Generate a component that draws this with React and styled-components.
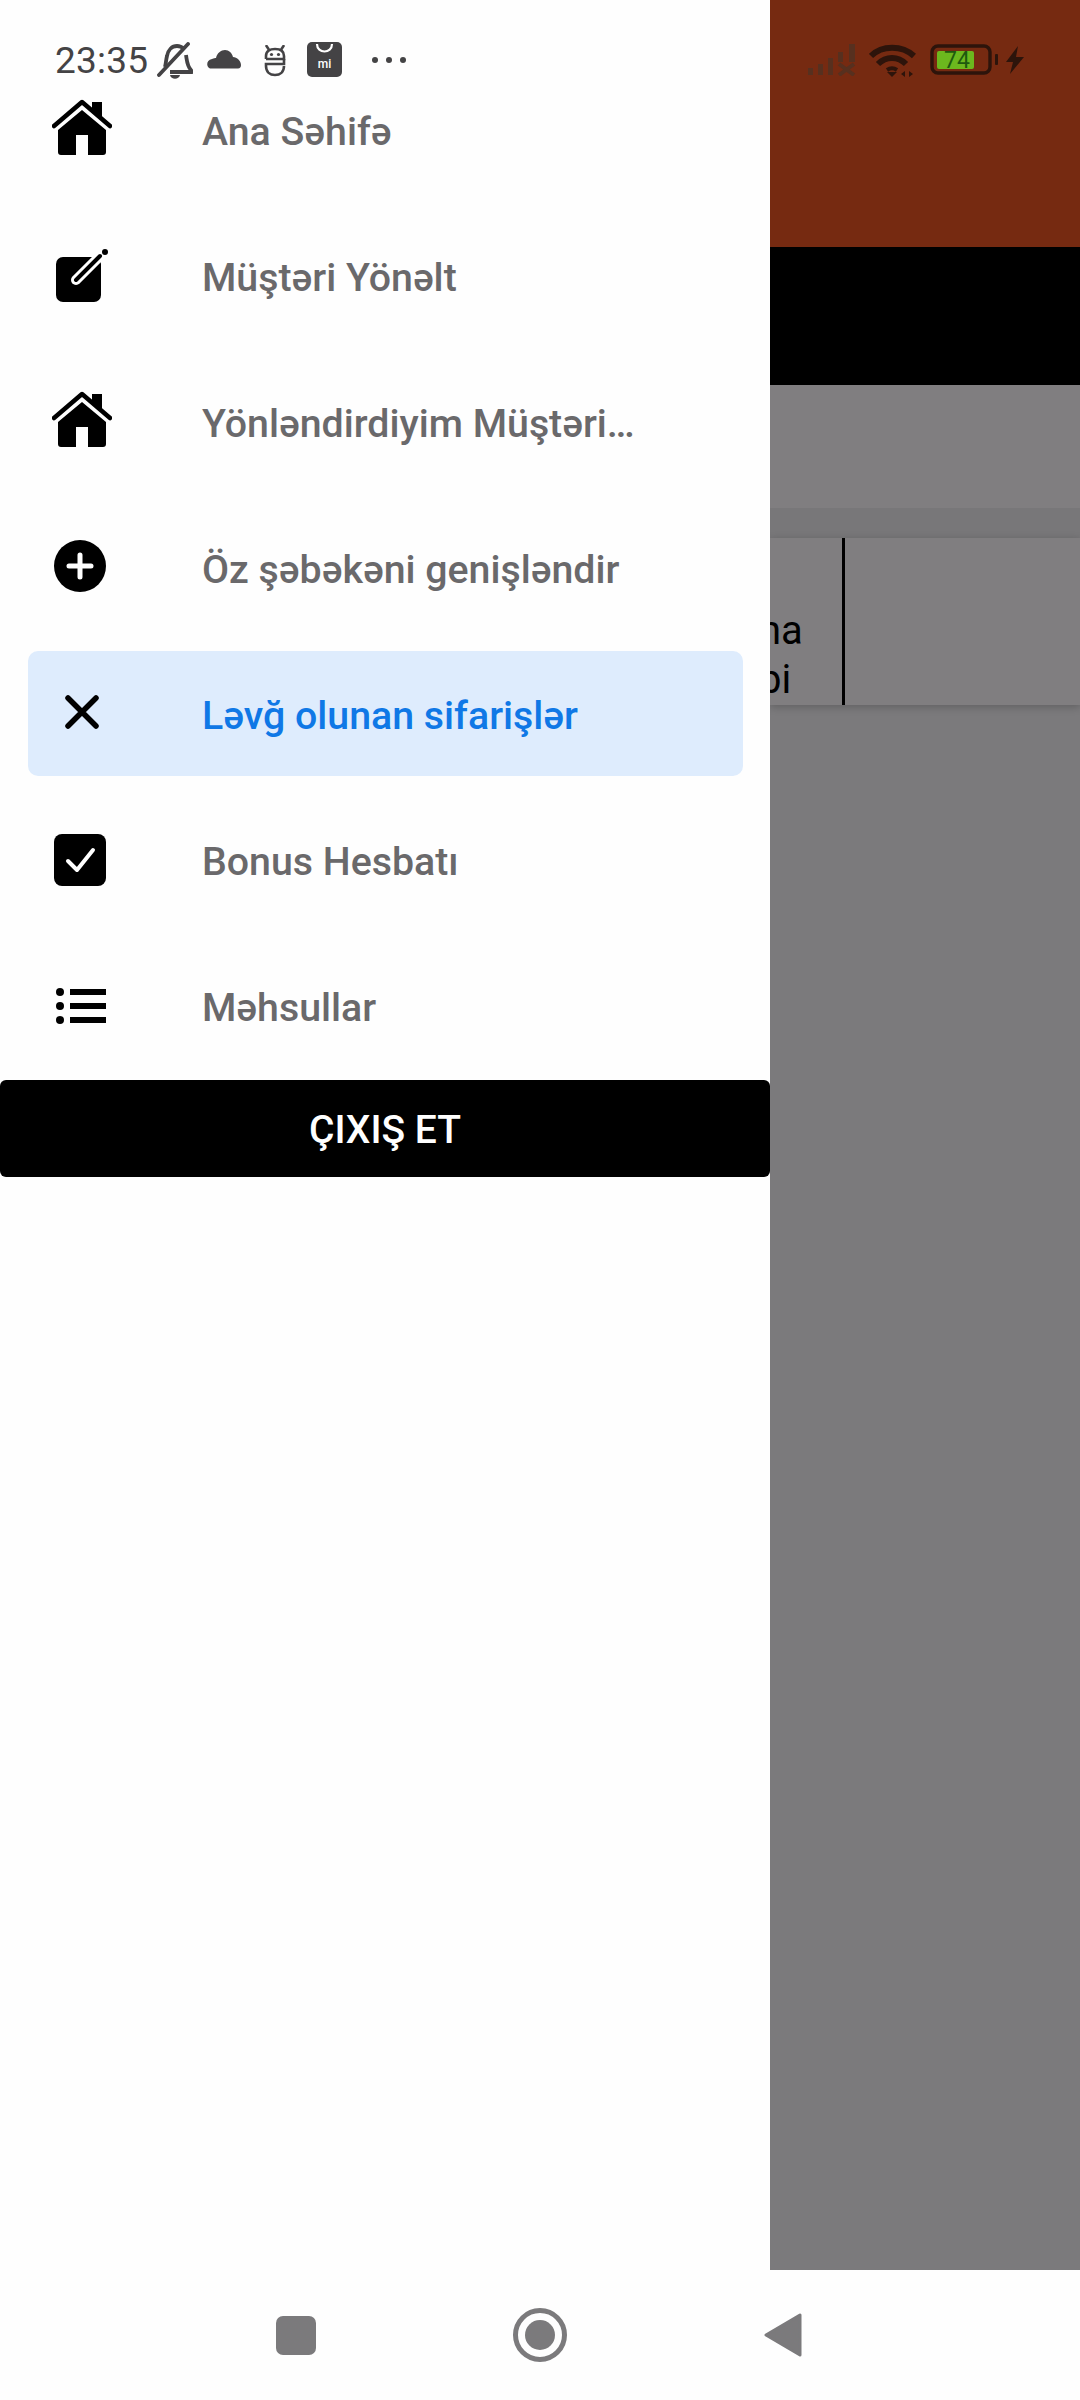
import React from 'react'
import styled, { createGlobalStyle } from 'styled-components'

const GlobalStyle = createGlobalStyle`
  html, body {
    margin: 0;
    padding: 0;
    background: #fff;
  }
  * {
    box-sizing: border-box;
  }
`

const Page = styled.div`
  width: 1080px;
  height: 2400px;
  display: flex;
  flex-direction: column;
  font-family: Roboto, "Liberation Sans", sans-serif;
  background: #fefefe;
  overflow: hidden;
`

const Main = styled.div`
  height: 2270px;
  display: flex;
`

const Drawer = styled.aside`
  width: 770px;
  flex-shrink: 0;
  background: #fefefe;
  display: flex;
  flex-direction: column;
`

const StatusLeft = styled.div`
  height: 67px;
  padding: 42px 0 0 55px;
  display: flex;
  align-items: flex-start;
  color: #444345;
`

const Time = styled.span`
  font-size: 37px;
  line-height: 38px;
  width: 102px;
  letter-spacing: 0.2px;
`

const StatusGlyph = styled.svg`
  display: block;
  flex-shrink: 0;
  margin-top: ${p => p.$top || 0}px;
  margin-right: ${p => p.$gap || 0}px;
`

const Menu = styled.nav`
  padding: 0 27px 0 28px;
  display: flex;
  flex-direction: column;
  gap: 21px;
`

const MenuItem = styled.div`
  height: 125px;
  display: flex;
  align-items: center;
  border-radius: 10px;
  background: ${p => (p.$active ? '#deecfd' : 'transparent')};
`

const IconSlot = styled.div`
  width: 174px;
  padding-left: 24px;
  flex-shrink: 0;
  display: flex;
  align-items: center;
  color: #000;
`

const Label = styled.span`
  font-size: 39.3px;
  font-weight: 500;
  padding-top: 5px;
  color: ${p => (p.$active ? '#0f78e6' : '#6a696b')};
  white-space: nowrap;
`

const LogoutButton = styled.button`
  height: 97px;
  margin-top: 12px;
  width: 100%;
  border: none;
  border-radius: 6px;
  background: #000;
  color: #fff;
  font-family: inherit;
  font-size: 39px;
  font-weight: 500;
  padding: 2px 0 0;
`

const Backdrop = styled.div`
  flex: 1;
  display: flex;
  flex-direction: column;
  background: #7b7a7c;
  overflow: hidden;
`

const Header = styled.div`
  height: 247px;
  background: #762a11;
  padding: 44px 0 0 38px;
  display: flex;
  align-items: flex-start;
`

const BlackBar = styled.div`
  height: 138px;
  background: #000;
`

const GreyBar = styled.div`
  height: 123px;
  background: #807e80;
`

const Band = styled.div`
  height: 30px;
  background: #787779;
`

const TableRow = styled.div`
  height: 167px;
  display: flex;
  background: #807e80;
  box-shadow: 0 2px 8px rgba(0, 0, 0, 0.22);
`

const TableCell = styled.div`
  width: 75px;
  border-right: 3px solid #000;
  display: flex;
  flex-direction: column;
  justify-content: flex-end;
  color: #000;
  font-size: 40px;
  line-height: 49px;
  padding-bottom: 1px;
`

const CellLine = styled.span`
  margin-left: -11px;
`

const NavBar = styled.div`
  height: 130px;
  background: #fefefe;
  padding-left: 276px;
  display: flex;
  align-items: center;
  gap: 197px;
`

const NavSquare = styled.div`
  width: 40px;
  height: 39px;
  border-radius: 7px;
  background: #7b7a7c;
`

const NavHome = styled.div`
  width: 54px;
  height: 54px;
  border-radius: 50%;
  border: 5px solid #7b7a7c;
  display: flex;
  align-items: center;
  justify-content: center;

  &::after {
    content: '';
    width: 30px;
    height: 30px;
    border-radius: 50%;
    background: #7b7a7c;
  }
`

const IconSvg = styled.svg`
  display: block;
  flex-shrink: 0;
  margin-left: ${p => p.$left || 0}px;
  margin-bottom: ${p => p.$bottom || 0}px;
`

const BellOffIcon = () => (
  <StatusGlyph width="36" height="38" viewBox="0 0 36 38" fill="none" stroke="#444345" strokeWidth="3.8" $gap={14}>
    <path d="M8 25 C9 21 9 18 10 14 C11 8 15 4 20 4 C23 4 25 5 27 7" strokeLinejoin="round" />
    <path d="M29 13 C30 19 30 24 34 28 L35 30 H13" strokeLinejoin="round" />
    <path d="M2 33 L31 2" strokeLinecap="round" />
    <path d="M13 33 H23 C22 38 14 38 13 33 Z" fill="#444345" stroke="none" />
  </StatusGlyph>
)

const CloudIcon = () => (
  <StatusGlyph width="34" height="20" viewBox="0 0 34 20" $top={7} $gap={22}>
    <path
      d="M3 19.5 C-1 18 -1 11 5 10 C7 9 8 9 9 9 C10 4 14 1 18 1 C22 1 25 4 26 8 C30 8 34 12 34 16 C34 18 33 19.5 31 19.5 Z"
      fill="#444345"
    />
  </StatusGlyph>
)

const RobotIcon = () => (
  <StatusGlyph width="24" height="32" viewBox="0 0 24 32" fill="none" stroke="#444345" strokeWidth="2.6" $top={3} $gap={20}>
    <path d="M3 14 V11 C3 6 7 4 12 4 C17 4 21 6 21 11 V14 H3" />
    <path d="M21 14 V19 H3 C3 19 3 20 3 21 C3 27 7 30 12 30 C17 30 21 27 21 21" />
    <path d="M3.5 1 L5.5 4 M20.5 1 L18.5 4" strokeLinecap="round" />
    <circle cx="8.5" cy="9.5" r="1.6" fill="#444345" stroke="none" />
    <circle cx="15.5" cy="9.5" r="1.6" fill="#444345" stroke="none" />
  </StatusGlyph>
)

const MiShopIcon = () => (
  <StatusGlyph width="35" height="35" viewBox="0 0 35 35" $gap={30}>
    <rect width="35" height="35" rx="5" fill="#444345" />
    <path d="M10 2 C10 12 25 12 25 2" fill="none" stroke="#fff" strokeWidth="2.2" />
    <text x="17.5" y="26" textAnchor="middle" fontSize="12" fontWeight="500" fill="#fff" fontFamily="Roboto, sans-serif">
      mi
    </text>
  </StatusGlyph>
)

const DotsIcon = () => (
  <StatusGlyph width="34" height="8" viewBox="0 0 34 8" $top={14}>
    <circle cx="3" cy="4" r="3" fill="#444345" />
    <circle cx="17" cy="4" r="3" fill="#444345" />
    <circle cx="31" cy="4" r="3" fill="#444345" />
  </StatusGlyph>
)

const SignalIcon = () => (
  <StatusGlyph width="48" height="32" viewBox="0 0 48 32" fill="#57301f" $gap={13}>
    <rect x="0" y="24" width="5" height="7" />
    <rect x="10" y="20" width="5" height="11" />
    <rect x="20" y="14" width="5" height="17" />
    <rect x="30" y="8" width="5" height="10" />
    <rect x="41" y="0" width="6" height="18" />
    <path d="M31 20 L46 31 M46 20 L31 31" stroke="#57301f" strokeWidth="4" />
  </StatusGlyph>
)

const WifiIcon = () => (
  <StatusGlyph width="47" height="34" viewBox="0 0 47 34" fill="none" stroke="#2d140b" strokeWidth="6" $gap={14}>
    <path d="M2 12 C13 1 33 1 45 12" />
    <path d="M9 20 C17 12 29 12 37 20" />
    <path d="M18 26 C21 24 25 24 28 26" strokeWidth="4" />
    <path d="M18 28 H28 L23 33 Z" fill="#2d140b" stroke="none" />
    <path d="M36 27 L32 30 L36 33 Z M40 27 L44 30 L40 33 Z" fill="#2d140b" stroke="none" />
  </StatusGlyph>
)

const BatteryIcon = () => (
  <StatusGlyph width="70" height="32" viewBox="0 0 70 32" $gap={6}>
    <rect x="2" y="2" width="58" height="27" rx="6" fill="none" stroke="#2d140b" strokeWidth="3.4" />
    <rect x="7" y="7" width="37" height="18" rx="2" fill="#6cb81e" />
    <text x="27" y="24" textAnchor="middle" fontSize="23" fill="#1e5a0e" fontFamily="Roboto, sans-serif">
      74
    </text>
    <rect x="65" y="10" width="3" height="11" rx="1" fill="#2d140b" />
  </StatusGlyph>
)

const BoltIcon = () => (
  <StatusGlyph width="18" height="28" viewBox="0 0 18 28" $top={2}>
    <path d="M12 0 L0 16 H7 L4 28 L18 11 H10 Z" fill="#2d140b" />
  </StatusGlyph>
)

const HomeIcon = () => (
  <IconSvg width="60" height="56" viewBox="0 0 60 56" $bottom={5}>
    <path d="M40 3 H50 V18 L40 10 Z" fill="#000" />
    <path d="M2 27 L30 3 L58 27" fill="none" stroke="#000" strokeWidth="4.5" strokeLinecap="round" strokeLinejoin="round" />
    <path
      d="M6 31 L30 11 L54 31 V53 A3 3 0 0 1 51 56 H36 V36 H24 V56 H9 A3 3 0 0 1 6 53 Z"
      fill="#000"
    />
  </IconSvg>
)

const EditIcon = () => (
  <IconSvg width="56" height="54" viewBox="0 0 56 54" $left={4}>
    <rect x="0" y="8" width="45" height="45" rx="7" fill="#000" />
    <path d="M20 31 L44 7" stroke="#fff" strokeWidth="10" strokeLinecap="round" />
    <path d="M20 31 L44 7" stroke="#000" strokeWidth="4" strokeLinecap="round" />
    <circle cx="49" cy="3" r="3" fill="#000" />
  </IconSvg>
)

const PlusIcon = () => (
  <IconSvg width="52" height="52" viewBox="0 0 52 52" $left={2} $bottom={3}>
    <circle cx="26" cy="26" r="26" fill="#000" />
    <path d="M26 15 V37 M15 26 H37" stroke="#fff" strokeWidth="5" strokeLinecap="round" />
  </IconSvg>
)

const CloseIcon = () => (
  <IconSvg width="34" height="34" viewBox="0 0 34 34" $left={13} $bottom={3}>
    <path d="M3 3 L31 31 M31 3 L3 31" stroke="#000" strokeWidth="5.5" strokeLinecap="round" />
  </IconSvg>
)

const CheckIcon = () => (
  <IconSvg width="52" height="52" viewBox="0 0 52 52" $left={2}>
    <rect width="52" height="52" rx="8" fill="#000" />
    <path d="M14 27 L23 36 L39 16" fill="none" stroke="#fff" strokeWidth="4" strokeLinecap="round" strokeLinejoin="round" />
  </IconSvg>
)

const ListIcon = () => (
  <IconSvg width="50" height="36" viewBox="0 0 50 36" $left={4}>
    <circle cx="4" cy="4" r="4" fill="#000" />
    <circle cx="4" cy="18" r="4" fill="#000" />
    <circle cx="4" cy="32" r="4" fill="#000" />
    <rect x="14" y="1" width="36" height="6" fill="#000" />
    <rect x="14" y="15" width="36" height="6" fill="#000" />
    <rect x="14" y="29" width="36" height="6" fill="#000" />
  </IconSvg>
)

const items = [
  { label: 'Ana Səhifə', icon: <HomeIcon /> },
  { label: 'Müştəri Yönəlt', icon: <EditIcon /> },
  { label: 'Yönləndirdiyim Müştəri…', icon: <HomeIcon /> },
  { label: 'Öz şəbəkəni genişləndir', icon: <PlusIcon /> },
  { label: 'Ləvğ olunan sifarişlər', icon: <CloseIcon />, active: true },
  { label: 'Bonus Hesbatı', icon: <CheckIcon /> },
  { label: 'Məhsullar', icon: <ListIcon /> },
]

export default function App() {
  return (
    <Page>
      <GlobalStyle />
      <Main>
        <Drawer>
          <StatusLeft>
            <Time>23:35</Time>
            <BellOffIcon />
            <CloudIcon />
            <RobotIcon />
            <MiShopIcon />
            <DotsIcon />
          </StatusLeft>
          <Menu>
            {items.map(item => (
              <MenuItem key={item.label} $active={item.active}>
                <IconSlot>{item.icon}</IconSlot>
                <Label $active={item.active}>{item.label}</Label>
              </MenuItem>
            ))}
          </Menu>
          <LogoutButton>ÇIXIŞ ET</LogoutButton>
        </Drawer>
        <Backdrop>
          <Header>
            <SignalIcon />
            <WifiIcon />
            <BatteryIcon />
            <BoltIcon />
          </Header>
          <BlackBar />
          <GreyBar />
          <Band />
          <TableRow>
            <TableCell>
              <CellLine>na</CellLine>
              <CellLine>bi</CellLine>
            </TableCell>
          </TableRow>
        </Backdrop>
      </Main>
      <NavBar>
        <NavSquare />
        <NavHome />
        <svg width="38" height="46" viewBox="0 0 38 46">
          <path d="M36 3 V43 L2 23 Z" fill="#7b7a7c" stroke="#7b7a7c" strokeWidth="3" strokeLinejoin="round" />
        </svg>
      </NavBar>
    </Page>
  )
}
